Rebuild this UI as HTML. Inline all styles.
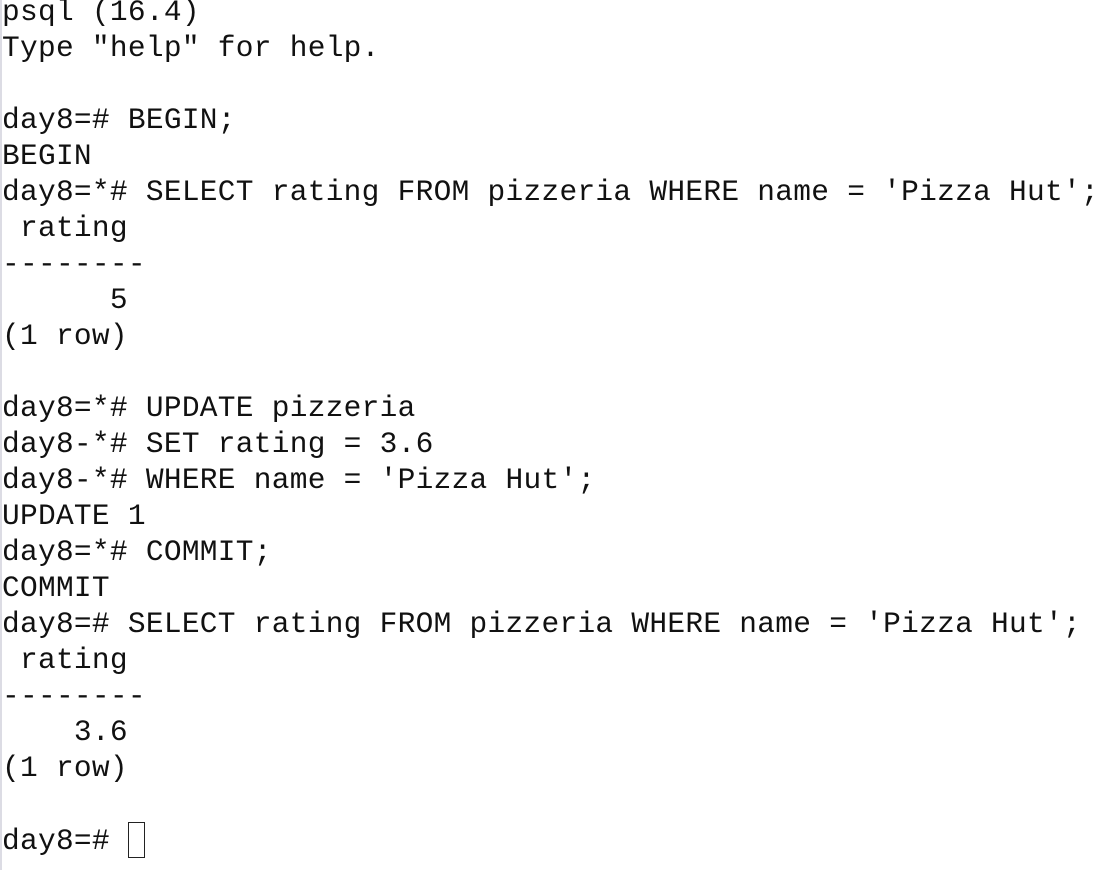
<!DOCTYPE html>
<html><head><meta charset="utf-8"><style>
html,body{margin:0;padding:0;background:#fff;width:1120px;height:870px;overflow:hidden}
.b{position:absolute;left:0;top:0;width:2px;height:870px;background:#dcdce4}
pre{position:absolute;left:2px;top:-6px;margin:0;font-family:"Liberation Mono","Courier New",monospace;font-size:29.5px;letter-spacing:0.28px;line-height:36px;color:#111}
.c{display:inline-block;width:17px;height:36px;border:1.5px solid #222;vertical-align:-9px;box-sizing:border-box}
</style></head><body><div class="b"></div><pre>psql (16.4)
Type "help" for help.

day8=# BEGIN;
BEGIN
day8=*# SELECT rating FROM pizzeria WHERE name = 'Pizza Hut';
 rating
--------
      5
(1 row)

day8=*# UPDATE pizzeria
day8-*# SET rating = 3.6
day8-*# WHERE name = 'Pizza Hut';
UPDATE 1
day8=*# COMMIT;
COMMIT
day8=# SELECT rating FROM pizzeria WHERE name = 'Pizza Hut';
 rating
--------
    3.6
(1 row)

day8=# <span class="c"></span></pre></body></html>
